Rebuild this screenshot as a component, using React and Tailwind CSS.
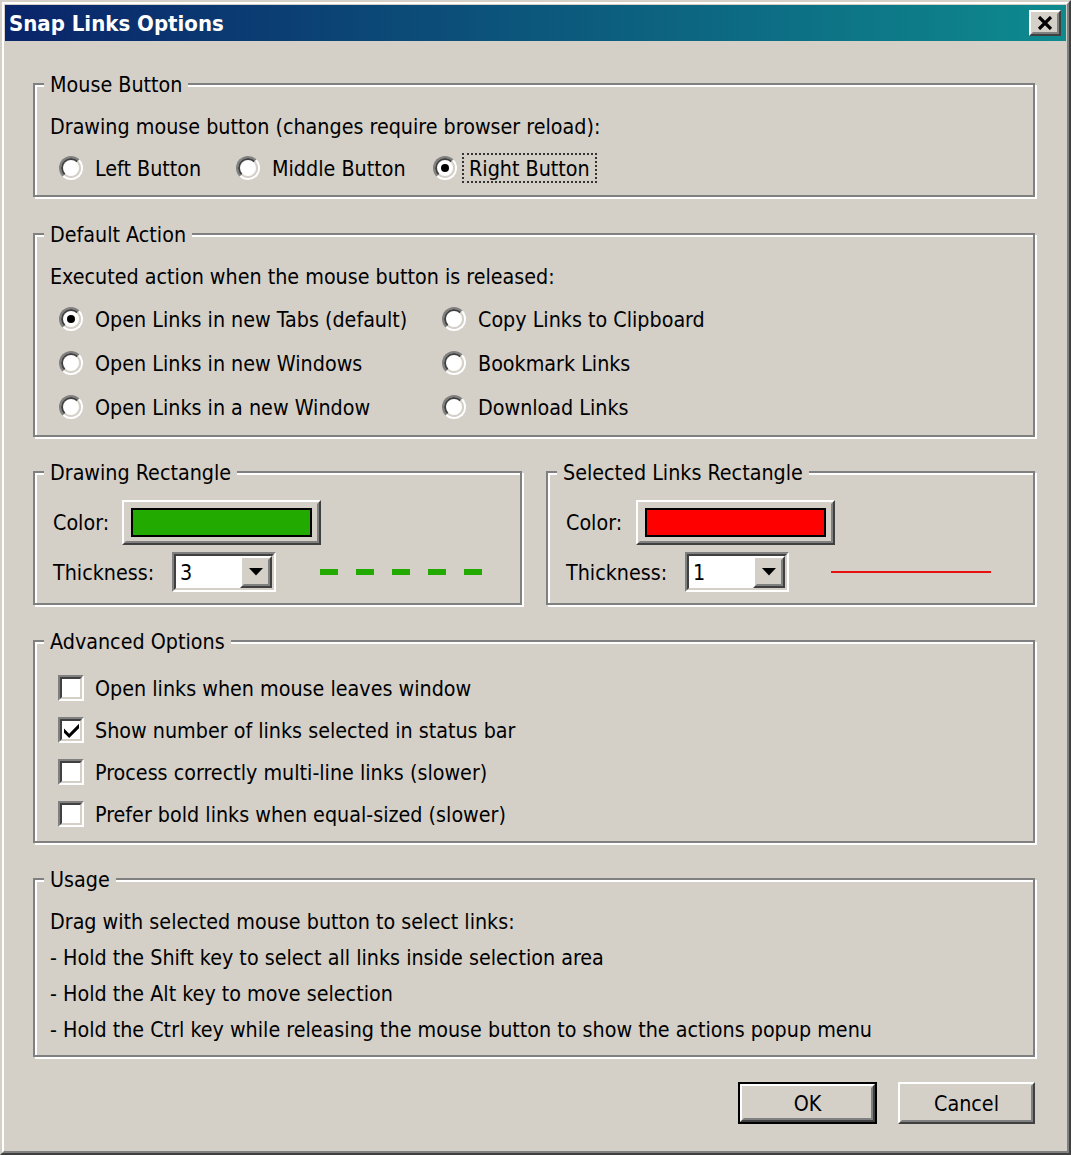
import React from 'react';

const raisedOuter = 'border-2 border-t-white border-l-white border-b-[#404040] border-r-[#404040]';
const raisedInner = 'border-2 border-t-[#d4d0c8] border-l-[#d4d0c8] border-b-[#808080] border-r-[#808080]';
const sunkenOuter = 'border-2 border-t-[#808080] border-l-[#808080] border-b-white border-r-white';
const sunkenInner = 'border-2 border-t-[#404040] border-l-[#404040] border-b-[#d4d0c8] border-r-[#d4d0c8]';

// etched group box, the title sits over the top line
function Group({ title, className = '', bodyClass = '', children }) {
  return (
    <div className={`flex flex-col border-2 border-[#808080] shadow-[inset_2px_2px_0_#fff,2px_2px_0_#fff] ${className}`}>
      <span className="self-start h-[24px] -mt-[12px] -mb-[12px] ml-[9px] px-[6px] bg-[#d4d0c8] leading-[24px] whitespace-nowrap">
        {title}
      </span>
      <div className={`flex flex-col ${bodyClass}`}>{children}</div>
    </div>
  );
}

function Radio({ label, checked, focused, className = '' }) {
  return (
    <div className={`flex items-center h-[44px] ${className}`}>
      <span className={`w-[24px] h-[24px] rounded-full flex shrink-0 ${sunkenOuter}`}>
        <span className={`flex-1 rounded-full bg-white flex items-center justify-center ${sunkenInner}`}>
          {checked && <span className="w-[8px] h-[8px] rounded-full bg-black" />}
        </span>
      </span>
      <span
        className={`ml-[5px] px-[5px] h-[30px] pt-[2px] flex items-center whitespace-nowrap ${
          focused ? 'border-2 border-dotted border-[#333]' : 'border-2 border-transparent'
        }`}
      >
        {label}
      </span>
    </div>
  );
}

function Checkbox({ label, checked }) {
  return (
    <div className="flex items-center h-[42px]">
      <span className={`w-[26px] h-[26px] flex shrink-0 ${sunkenOuter}`}>
        <span className={`flex-1 bg-white flex items-center justify-center ${sunkenInner}`}>
          {checked && (
            <svg width="15" height="15" viewBox="0 0 7 7">
              <polygon points="0,2.6 2.4,5 7,0.4 7,2.4 2.4,7 0,4.6" fill="#000" />
            </svg>
          )}
        </span>
      </span>
      <span className="ml-[11px] pt-[2px] whitespace-nowrap">{label}</span>
    </div>
  );
}

function ColorButton({ color }) {
  return (
    <div className={`w-[199px] h-[45px] flex ${raisedOuter}`}>
      <div className={`flex-1 flex px-[5px] py-[4px] ${raisedInner}`}>
        <div className="flex-1 border-2 border-black" style={{ backgroundColor: color }} />
      </div>
    </div>
  );
}

function Select({ value }) {
  return (
    <div className={`w-[104px] h-[40px] flex ${sunkenOuter}`}>
      <div className={`flex-1 flex bg-white ${sunkenInner}`}>
        <span className="flex-1 pl-[4px] pt-[2px] flex items-center">{value}</span>
        <div className={`w-[32px] flex ${raisedOuter}`}>
          <div className={`flex-1 flex items-center justify-center bg-[#d4d0c8] ${raisedInner}`}>
            <svg width="14" height="8" viewBox="0 0 14 8">
              <polygon points="0,0 14,0 7,7.5" fill="#000" />
            </svg>
          </div>
        </div>
      </div>
    </div>
  );
}

function Button({ label, isDefault }) {
  const inner = (
    <div className={`flex-1 flex ${raisedOuter}`}>
      <div className={`flex-1 flex items-center justify-center pt-[2px] ${raisedInner}`}>{label}</div>
    </div>
  );
  if (isDefault) {
    return <div className="w-[139px] h-[42px] flex border-2 border-black">{inner}</div>;
  }
  return <div className="w-[137px] h-[42px] flex">{inner}</div>;
}

export default function App() {
  return (
    <div className="w-[1071px] h-[1155px] bg-[#d4d0c8] text-black text-[21.3px] font-['DejaVu_Sans_Condensed','DejaVu_Sans',sans-serif] [font-stretch:condensed] border-2 border-t-[#d4d0c8] border-l-[#d4d0c8] border-b-[#404040] border-r-[#404040]">
      <div className="h-full flex flex-col p-[1px] border-2 border-t-white border-l-white border-b-[#808080] border-r-[#808080]">
        {/* title bar */}
        <div className="h-[36px] shrink-0 flex items-center justify-between bg-[linear-gradient(to_right,#0a246a,#0e8a8e)] pl-[4px] pr-[5px]">
          <span className="text-white font-bold text-[22px]">Snap Links Options</span>
          <div className={`w-[32px] h-[26px] flex ${raisedOuter}`}>
            <div className={`flex-1 flex items-center justify-center bg-[#d4d0c8] ${raisedInner}`}>
              <svg width="16" height="14" viewBox="0 0 16 14">
                <path d="M2 1 L14 13 M14 1 L2 13" stroke="#000" strokeWidth="3.2" />
              </svg>
            </div>
          </div>
        </div>

        <div className="flex-1 flex flex-col pl-[28px] pr-[31px]">
          <Group title="Mouse Button" className="mt-[42px] h-[114px]" bodyClass="pl-[15px] pt-[20px]">
            <div className="h-[42px] pt-[2px] flex items-center">Drawing mouse button (changes require browser reload):</div>
            <div className="flex items-center h-[42px] pl-[9px]">
              <Radio label="Left Button" className="w-[177px]" />
              <Radio label="Middle Button" className="w-[197px]" />
              <Radio label="Right Button" checked focused />
            </div>
          </Group>

          <Group title="Default Action" className="mt-[36px] h-[204px]" bodyClass="pl-[15px] pt-[20px]">
            <div className="h-[42px] pt-[2px] flex items-center">Executed action when the mouse button is released:</div>
            <div className="grid grid-cols-[383px_1fr] pl-[9px]">
              <Radio label="Open Links in new Tabs (default)" checked />
              <Radio label="Copy Links to Clipboard" />
              <Radio label="Open Links in new Windows" />
              <Radio label="Bookmark Links" />
              <Radio label="Open Links in a new Window" />
              <Radio label="Download Links" />
            </div>
          </Group>

          <div className="mt-[34px] grid grid-cols-2 gap-[24px]">
            <Group title="Drawing Rectangle" className="h-[134px]" bodyClass="pl-[18px] pt-[24px]">
              <div className="h-[50px] flex items-center">
                <span className="w-[69px] pt-[2px]">Color:</span>
                <ColorButton color="#22aa00" />
              </div>
              <div className="h-[50px] flex items-center">
                <span className="w-[119px] pt-[2px]">Thickness:</span>
                <Select value="3" />
                <div className="ml-[44px] flex gap-[18px]">
                  {[0, 1, 2, 3, 4].map((i) => (
                    <span key={i} className="w-[18px] h-[6px] bg-[#22aa00]" />
                  ))}
                </div>
              </div>
            </Group>
            <Group title="Selected Links Rectangle" className="h-[134px]" bodyClass="pl-[18px] pt-[24px]">
              <div className="h-[50px] flex items-center">
                <span className="w-[70px] pt-[2px]">Color:</span>
                <ColorButton color="#ff0000" />
              </div>
              <div className="h-[50px] flex items-center">
                <span className="w-[119px] pt-[2px]">Thickness:</span>
                <Select value="1" />
                <span className="ml-[42px] w-[160px] h-[2px] bg-[#e81010]" />
              </div>
            </Group>
          </div>

          <Group title="Advanced Options" className="mt-[35px] h-[203px]" bodyClass="pl-[23px] pt-[25px]">
            <Checkbox label="Open links when mouse leaves window" />
            <Checkbox label="Show number of links selected in status bar" checked />
            <Checkbox label="Process correctly multi-line links (slower)" />
            <Checkbox label="Prefer bold links when equal-sized (slower)" />
          </Group>

          <Group title="Usage" className="mt-[35px] h-[179px]" bodyClass="pl-[15px] pt-[23px]">
            {[
              'Drag with selected mouse button to select links:',
              '- Hold the Shift key to select all links inside selection area',
              '- Hold the Alt key to move selection',
              '- Hold the Ctrl key while releasing the mouse button to show the actions popup menu',
            ].map((t) => (
              <div key={t} className="h-[36px] pt-[2px] flex items-center whitespace-nowrap">{t}</div>
            ))}
          </Group>

          <div className="mt-[25px] flex justify-end gap-[21px]">
            <Button label="OK" isDefault />
            <Button label="Cancel" />
          </div>
        </div>
      </div>
    </div>
  );
}
